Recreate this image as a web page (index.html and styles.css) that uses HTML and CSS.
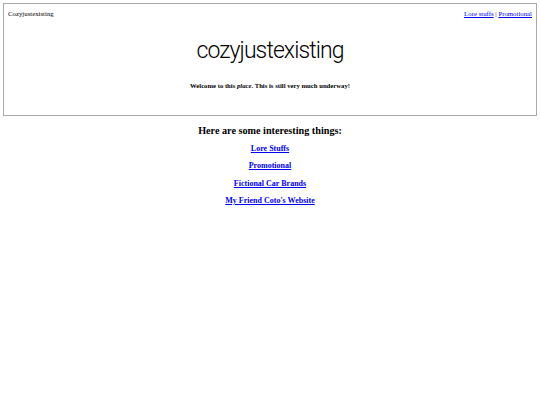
FILE: index.html
```html
<!DOCTYPE html>
<html>
<head>
<meta charset="utf-8">
<link rel="stylesheet" href="styles.css">
</head>
<body>
<header class="hero">
  <div class="topbar">
    <span class="brand">Cozyjustexisting</span>
    <nav class="nav"><a href="#">Lore stuffs</a> | <a href="#">Promotional</a></nav>
  </div>
  <h1 class="title">cozyjustexisting</h1>
  <p class="welcome">Welcome to this <i>place</i>. This is still very much underway!</p>
</header>
<main class="content">
  <h2 class="heading">Here are some interesting things:</h2>
  <ul class="links">
    <li><a href="#">Lore Stuffs</a></li>
    <li><a href="#">Promotional</a></li>
    <li><a href="#">Fictional Car Brands</a></li>
    <li><a href="#">My Friend Coto's Website</a></li>
  </ul>
</main>
</body>
</html>
```
FILE: styles.css
```css
html, body { margin: 0; padding: 0; background: #fff; }
body { font-family: "Liberation Serif", "Times New Roman", serif; color: #000; }
a { color: #0000ee; }
.hero {
  margin: 3px;
  border: 1px solid #a9a9a9;
  height: 111px;
  box-sizing: content-box;
}
.topbar {
  display: flex;
  justify-content: space-between;
  padding: 6px 4px 0 4px;
  font-size: 6.8px;
  line-height: 8px;
}
.title {
  margin: 18px 0 0 0;
  text-align: center;
  font-family: Roboto, "Open Sans", sans-serif;
  font-weight: 300;
  font-size: 23px;
  letter-spacing: -0.9px;
  line-height: 30px;
}
.welcome {
  margin: 16px 0 0 0;
  text-align: center;
  font-weight: bold;
  font-size: 6.7px;
  line-height: 8px;
}
.content { text-align: center; }
.heading {
  margin: 8px 0 0 0;
  font-size: 10.2px;
  line-height: 13px;
}
.links { list-style: none; margin: 7px 0 0 0; padding: 0; }
.links li {
  font-weight: bold;
  font-size: 8px;
  line-height: 10px;
  margin-bottom: 7.4px;
}
```
